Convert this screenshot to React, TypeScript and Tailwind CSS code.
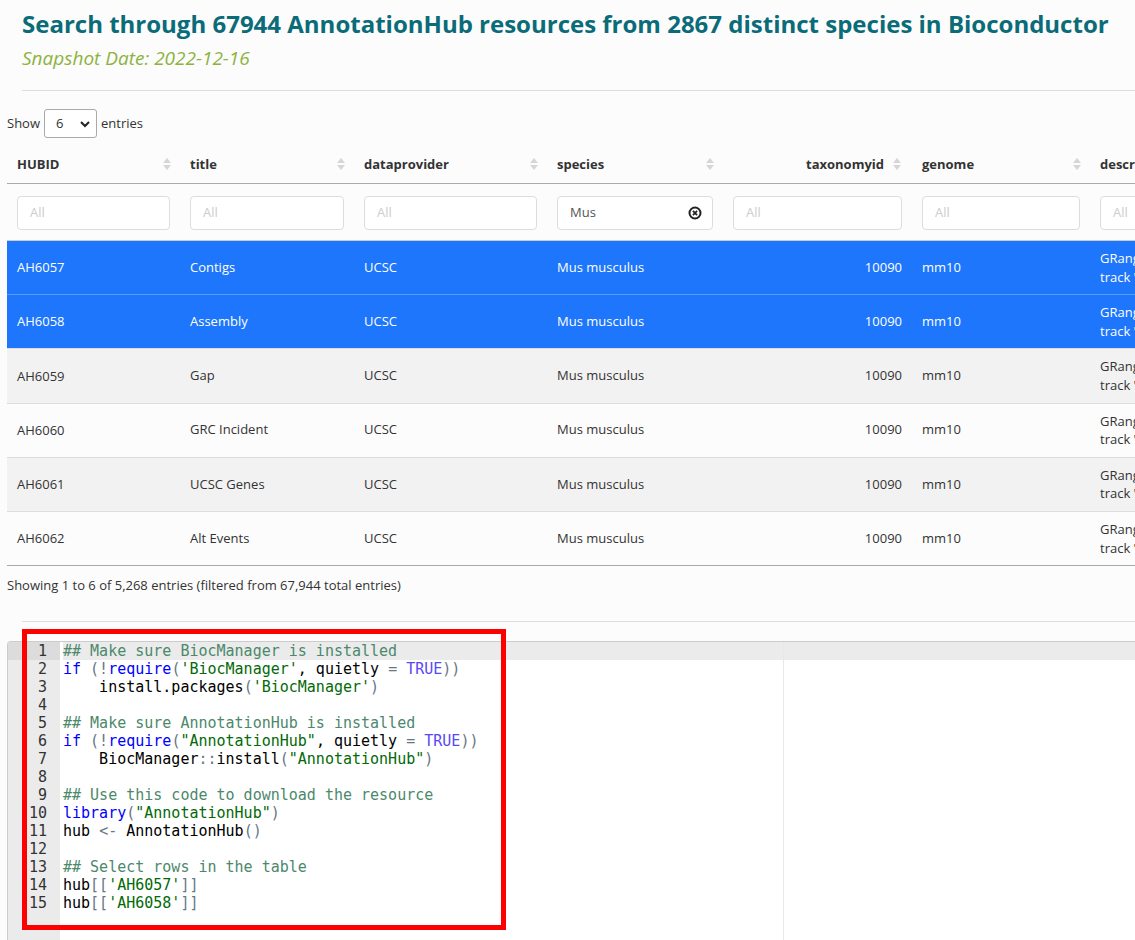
import React from "react";

const cols = [173, 174, 193, 176, 189, 178, 320];

const rows = [
  { id: "AH6057", title: "Contigs", sel: true },
  { id: "AH6058", title: "Assembly", sel: true },
  { id: "AH6059", title: "Gap", sel: false },
  { id: "AH6060", title: "GRC Incident", sel: false },
  { id: "AH6061", title: "UCSC Genes", sel: false },
  { id: "AH6062", title: "Alt Events", sel: false },
];

function SortIcon() {
  return (
    <svg width="8" height="14" viewBox="0 0 8 14" className="shrink-0">
      <polygon points="0,6 4,1 8,6" fill="#d6d6d6" />
      <polygon points="0,8 4,13 8,8" fill="#d6d6d6" />
    </svg>
  );
}

function ClearIcon() {
  return (
    <svg width="14" height="14" viewBox="0 0 14 14">
      <circle cx="7" cy="7" r="5.5" fill="none" stroke="#222" strokeWidth="2" />
      <path d="M4.9 4.9 L9.1 9.1 M9.1 4.9 L4.9 9.1" stroke="#222" strokeWidth="1.8" />
    </svg>
  );
}

// ace textmate colours
const C = {
  com: "text-[#4c886b]",
  kw: "text-[#0000ff]",
  str: "text-[#036a07]",
  con: "text-[#5848f6]",
  op: "text-[#687687]",
  id: "text-black",
};

type Tok = [string, string];

const code: Tok[][] = [
  [[C.com, "## Make sure BiocManager is installed"]],
  [[C.kw, "if"], [C.id, " "], [C.op, "(!"], [C.kw, "require"], [C.op, "("], [C.str, "'BiocManager'"], [C.id, ", quietly "], [C.op, "="], [C.id, " "], [C.con, "TRUE"], [C.op, "))"]],
  [[C.id, "    install.packages"], [C.op, "("], [C.str, "'BiocManager'"], [C.op, ")"]],
  [],
  [[C.com, "## Make sure AnnotationHub is installed"]],
  [[C.kw, "if"], [C.id, " "], [C.op, "(!"], [C.kw, "require"], [C.op, "("], [C.str, "\"AnnotationHub\""], [C.id, ", quietly "], [C.op, "="], [C.id, " "], [C.con, "TRUE"], [C.op, "))"]],
  [[C.id, "    BiocManager"], [C.op, "::"], [C.id, "install"], [C.op, "("], [C.str, "\"AnnotationHub\""], [C.op, ")"]],
  [],
  [[C.com, "## Use this code to download the resource"]],
  [[C.kw, "library"], [C.op, "("], [C.str, "\"AnnotationHub\""], [C.op, ")"]],
  [[C.id, "hub "], [C.op, "<-"], [C.id, " AnnotationHub"], [C.op, "()"]],
  [],
  [[C.com, "## Select rows in the table"]],
  [[C.id, "hub"], [C.op, "[["], [C.str, "'AH6057'"], [C.op, "]]"]],
  [[C.id, "hub"], [C.op, "[["], [C.str, "'AH6058'"], [C.op, "]]"]],
];

export default function App() {
  const headers = ["HUBID", "title", "dataprovider", "species", "taxonomyid", "genome", "description"];
  return (
    <div className="relative min-h-screen w-full overflow-hidden bg-[#fcfcfc] font-['Open_Sans',sans-serif] text-[#333]">
      <div className="pl-[22px]">
        <h1 className="pt-[8px] text-[24px] leading-[32px] font-bold text-[#0a6b79] whitespace-nowrap">
          Search through 67944 AnnotationHub resources from 2867 distinct species in Bioconductor
        </h1>
        <div className="mt-[6px] text-[19px] leading-[24px] italic text-[#8cb33f]">Snapshot Date: 2022-12-16</div>
        <div className="mt-[20px] h-px bg-[#dddddd]" />
      </div>

      <div className="pl-[7px]">
        <div className="mt-[18px] flex items-center gap-[4px] text-[13px]">
          <span>Show</span>
          <div className="flex h-[29px] w-[53px] items-center justify-between rounded-[3px] border border-[#aaa] bg-white pl-[11px] pr-[6px]">
            <span>6</span>
            <svg width="10" height="8" viewBox="0 0 10 8">
              <path d="M1 2 L5 6 L9 2" fill="none" stroke="#222" strokeWidth="2" />
            </svg>
          </div>
          <span>entries</span>
        </div>

        <table className="mt-[7px] table-fixed border-collapse text-[13px]" style={{ width: cols.reduce((a, b) => a + b, 0) }}>
          <colgroup>
            {cols.map((w, i) => (
              <col key={i} style={{ width: w }} />
            ))}
          </colgroup>
          <thead>
            <tr className="border-b border-[#aaaaaa]">
              {headers.map((h, i) => (
                <th key={h} className="py-[10px] pl-[10px] pr-[9px] text-left font-bold leading-[18px]">
                  {i === 4 ? (
                    <div className="flex items-center justify-end gap-[9px] pr-[2px]">
                      <span>{h}</span>
                      <SortIcon />
                    </div>
                  ) : i === 6 ? (
                    <span className="whitespace-nowrap">{h}</span>
                  ) : (
                    <div className="flex items-center justify-between">
                      <span>{h}</span>
                      <SortIcon />
                    </div>
                  )}
                </th>
              ))}
            </tr>
            <tr>
              {headers.map((h, i) => (
                <td key={h} className="px-[10px] pt-[12px] pb-[10px]">
                  <div className="flex h-[34px] items-center justify-between rounded-[4px] border border-[#dddddd] bg-white pl-[12px] pr-[10px] text-[13px]">
                    {i === 3 ? (
                      <>
                        <span className="text-[#555]">Mus</span>
                        <ClearIcon />
                      </>
                    ) : (
                      <span className="text-[#cccccc]">All</span>
                    )}
                  </div>
                </td>
              ))}
            </tr>
          </thead>
          <tbody>
            {rows.map((r, i) => {
              const bg = r.sel
                ? "bg-[#1d76fb] text-white border-[#5b9bf9]"
                : i % 2 === 0
                ? "bg-[#f2f2f2] border-[#dddddd]"
                : "bg-[#fcfcfc] border-[#dddddd]";
              const last = i === rows.length - 1 ? "border-b border-b-[#aaaaaa]" : "";
              return (
                <tr key={r.id} className={`border-t ${bg} ${last} ${i === 0 ? "border-t-[#cccccc]" : ""}`}>
                  <td className="px-[10px] py-[8px] leading-[18.6px] align-middle">{r.id}</td>
                  <td className="px-[10px] align-middle">{r.title}</td>
                  <td className="px-[10px] align-middle">UCSC</td>
                  <td className="px-[10px] align-middle">Mus musculus</td>
                  <td className="px-[10px] text-right align-middle">10090</td>
                  <td className="px-[10px] align-middle">mm10</td>
                  <td className="px-[10px] py-[8px] leading-[18.6px] align-middle whitespace-nowrap">
                    <div>GRanges object from UCSC</div>
                    <div>track '{r.title}'</div>
                  </td>
                </tr>
              );
            })}
          </tbody>
        </table>

        <div className="mt-[10px] text-[13px] leading-[18px]">
          Showing 1 to 6 of 5,268 entries (filtered from 67,944 total entries)
        </div>
      </div>

      <div className="mt-[27px] ml-[22px] h-px bg-[#dddddd]" />

      <div className="mt-[19px] ml-[7px] flex h-[320px] overflow-hidden rounded-tl-[4px] border-t border-l border-[#cccccc] bg-white font-['DejaVu_Sans_Mono',monospace] text-[15px] leading-[18px]">
        <div className="w-[52px] shrink-0 bg-[#ebebeb] pr-[13px] text-right text-[#333]">
          {code.map((_, i) => (
            <div key={i} className={i === 0 ? "bg-[#dcdcdc] -mr-[13px] pr-[13px]" : ""}>
              {i + 1}
            </div>
          ))}
        </div>
        <div className="relative flex-1">
          <div className="flex">
            <div className="w-[724px] shrink-0 border-r border-[#e8e8e8] pl-[3px]">
              {code.map((line, i) => (
                <div key={i} className={`h-[18px] whitespace-pre ${i === 0 ? "bg-[#ebebeb]" : ""}`}>
                  {line.map(([c, t], j) => (
                    <span key={j} className={c}>
                      {t}
                    </span>
                  ))}
                </div>
              ))}
              <div className="h-[50px]" />
            </div>
            <div className="flex-1">
              <div className="h-[18px] bg-[#ebebeb]" />
            </div>
          </div>
        </div>
      </div>

      <div className="absolute left-[22px] top-[629px] h-[301px] w-[484px] border-[5px] border-[#ff0000]" />
    </div>
  );
}
